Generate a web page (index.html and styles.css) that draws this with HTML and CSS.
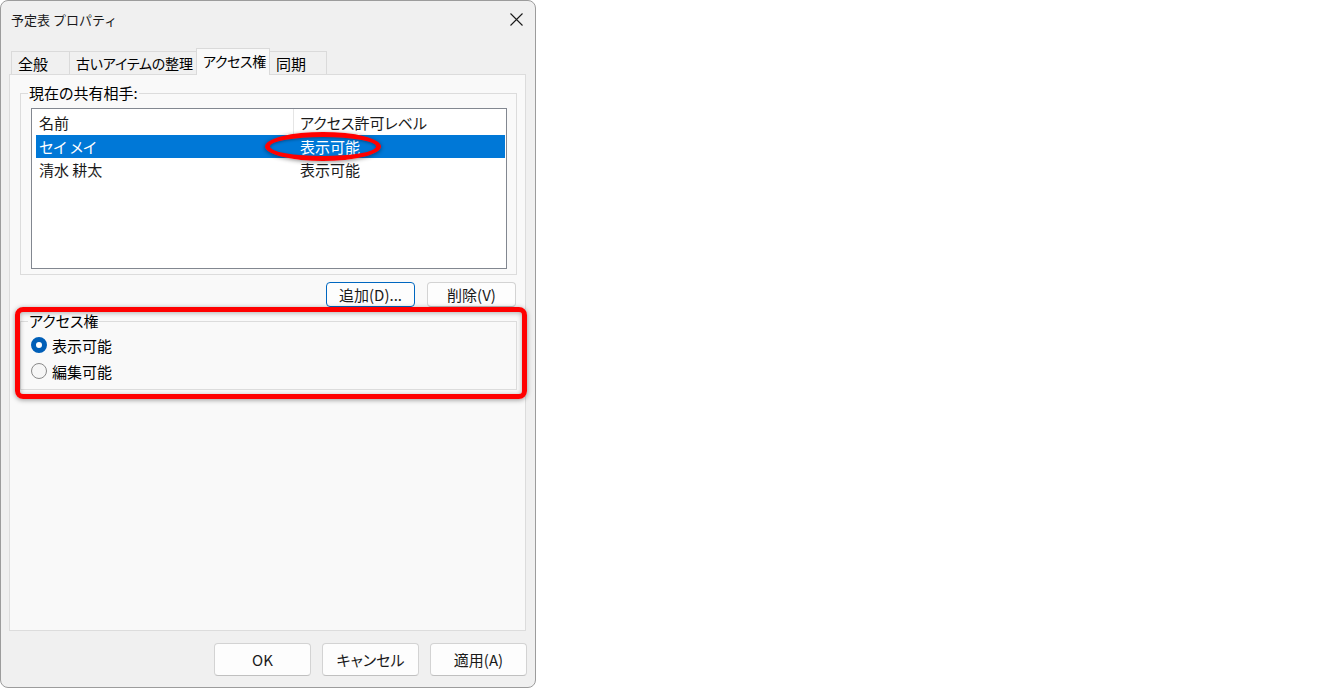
FILE: index.html
```html
<!DOCTYPE html>
<html lang="ja">
<head>
<meta charset="utf-8">
<title>予定表 プロパティ</title>
<link rel="stylesheet" href="styles.css">
</head>
<body>
<div class="window">
  <div class="titlebar">
    <span class="title">予定表 プロパティ</span>
    <svg class="close" width="13" height="13" viewBox="0 0 13 13"><path d="M0.5 0.5 L12.5 12.5 M12.5 0.5 L0.5 12.5" stroke="#1a1a1a" stroke-width="1.1" fill="none"/></svg>
  </div>
  <div class="tabs">
    <div class="tab t1">全般</div>
    <div class="tab t2">古いアイテムの整理</div>
    <div class="tab t3 active">アクセス権</div>
    <div class="tab t4">同期</div>
  </div>
  <div class="panel">
    <fieldset class="group share">
      <legend>現在の共有相手:</legend>
      <div class="listbox">
        <div class="lv-header">
          <div class="col name">名前</div>
          <div class="col level">アクセス許可レベル</div>
        </div>
        <div class="lv-row selected">
          <div class="col name">セイ メイ</div>
          <div class="col level">表示可能</div>
        </div>
        <div class="lv-row">
          <div class="col name">清水 耕太</div>
          <div class="col level">表示可能</div>
        </div>
        <div class="ellipse"></div>
      </div>
    </fieldset>
    <div class="btnrow">
      <button class="btn small focus">追加(D)...</button>
      <button class="btn small">削除(V)</button>
    </div>
    <fieldset class="group access">
      <legend>アクセス権</legend>
      <div class="radio"><span class="dot checked"></span><span>表示可能</span></div>
      <div class="radio"><span class="dot"></span><span>編集可能</span></div>
    </fieldset>
    <div class="highlight"></div>
  </div>
  <div class="footer">
    <button class="btn big">OK</button>
    <button class="btn big">キャンセル</button>
    <button class="btn big">適用(A)</button>
  </div>
</div>
</body>
</html>
```

FILE: styles.css
```css
html, body {
  margin: 0;
  background: #ffffff;
}
body {
  font-family: "Noto Sans CJK JP", "Noto Sans", sans-serif;
  color: #1a1a1a;
  font-feature-settings: "palt";
}
.window {
  width: 536px;
  height: 688px;
  box-sizing: border-box;
  border: 1px solid #9c9c9c;
  border-radius: 8px;
  background: #f0f0f0;
  display: flex;
  flex-direction: column;
  overflow: hidden;
}
.titlebar {
  height: 47px;
  flex: none;
  display: flex;
  justify-content: space-between;
  align-items: flex-start;
  padding-left: 10px;
  padding-right: 12px;
  box-sizing: border-box;
}
.title {
  font-size: 13px;
  line-height: 18px;
  margin-top: 10px;
  font-feature-settings: normal;
}
.close {
  margin-top: 12px;
}
.tabs {
  height: 26px;
  flex: none;
  display: flex;
  align-items: flex-end;
  padding-left: 10px;
}
.tab {
  height: 23px;
  box-sizing: border-box;
  border: 1px solid #dadada;
  border-bottom: none;
  border-left: none;
  background: #f0f0f0;
  font-size: 15px;
  line-height: 23px;
  padding-left: 6px;
  white-space: nowrap;
  overflow: hidden;
  color: #000;
}
.t1 { width: 59px; border-left: 1px solid #dadada; }
.t2 { width: 127px; padding-left: 6px; font-size: 14px; letter-spacing: -0.2px; }
.t3 { width: 74px; padding-left: 6px; font-size: 14px; letter-spacing: -0.4px; }
.t4 { width: 57px; }
.tab.active {
  height: 27px;
  margin-bottom: -1px;
  background: #f9f9f9;
  border-left: 1px solid #dadada;
  margin-left: -1px;
  position: relative;
  z-index: 1;
  line-height: 25px;
}
.panel {
  flex: none;
  height: 557px;
  margin-left: 8px;
  width: 517px;
  box-sizing: border-box;
  background: #f9f9f9;
  border: 1px solid #dcdcdc;
  padding: 0 8px 0 10px;
  position: relative;
}
.group {
  margin: 0;
  border: 1px solid #dcdcdc;
  min-width: 0;
  box-sizing: border-box;
}
.group legend {
  font-size: 15px;
  line-height: 18px;
  padding: 0 1px;
  margin-left: -3px;
  color: #000;
}
.share {
  margin-top: 9px;
  padding: 6px 9px 5px 10px;
}
.listbox {
  height: 161px;
  box-sizing: border-box;
  border: 1px solid #828790;
  background: #ffffff;
  position: relative;
  font-size: 15px;
}
.lv-header, .lv-row {
  display: flex;
  margin-left: 4px;
  margin-right: 1px;
}
.lv-header {
  height: 26px;
  line-height: 27px;
  margin-left: 0;
  padding-left: 4px;
}
.lv-row {
  height: 23px;
  line-height: 23px;
}
.col.name {
  width: 257px;
  padding-left: 3px;
  box-sizing: border-box;
}
.lv-header .col.level {
  border-left: 1px solid #e5e5e5;
  padding-left: 6px;
}
.lv-row .col.level {
  padding-left: 7px;
}
.lv-row.selected {
  background: #0078d7;
  color: #ffffff;
}
.ellipse {
  position: absolute;
  left: 233px;
  top: 23px;
  width: 116px;
  height: 29px;
  box-sizing: border-box;
  border: 5px solid #ff0000;
  border-radius: 50%;
  box-shadow: 0 1px 4px rgba(0,0,0,0.45), inset 0 1px 3px rgba(0,0,0,0.35);
}
.btnrow {
  display: flex;
  justify-content: flex-end;
  gap: 12px;
  margin-top: 7px;
  padding-right: 1px;
}
.btn {
  font-family: inherit;
  font-feature-settings: "palt";
  font-size: 15px;
  color: #1a1a1a;
  background: #fdfdfd;
  border: 1px solid #d3d3d3;
  border-bottom-color: #c0c0c0;
  border-radius: 4px;
  padding: 0;
  margin: 0;
  box-sizing: border-box;
}
.btn.small {
  width: 89px;
  height: 25px;
  line-height: 22px;
}
.btn.focus {
  border: 1px solid #0067c0;
}
.access {
  margin-top: 5px;
  padding: 2px 9px 5px 10px;
}
.radio {
  display: flex;
  align-items: center;
  height: 26px;
  font-size: 15px;
  color: #000;
}
.dot {
  width: 16px;
  height: 16px;
  box-sizing: border-box;
  border-radius: 50%;
  border: 1px solid #8a8a8a;
  background: #f6f6f6;
  margin-right: 5px;
  flex: none;
}
.dot.checked {
  border: 5px solid #005fb8;
  background: #ffffff;
}
.highlight {
  position: absolute;
  left: 5px;
  top: 232px;
  width: 512px;
  height: 92px;
  box-sizing: border-box;
  border: 5px solid #ff0000;
  border-radius: 8px;
  box-shadow: 0 1px 5px rgba(0,0,0,0.4), inset 0 1px 5px rgba(0,0,0,0.3);
  pointer-events: none;
}
.footer {
  flex: 1;
  display: flex;
  justify-content: flex-end;
  align-items: flex-start;
  gap: 11px;
  padding: 12px 8px 0 0;
}
.btn.big {
  width: 97px;
  height: 33px;
}
```
